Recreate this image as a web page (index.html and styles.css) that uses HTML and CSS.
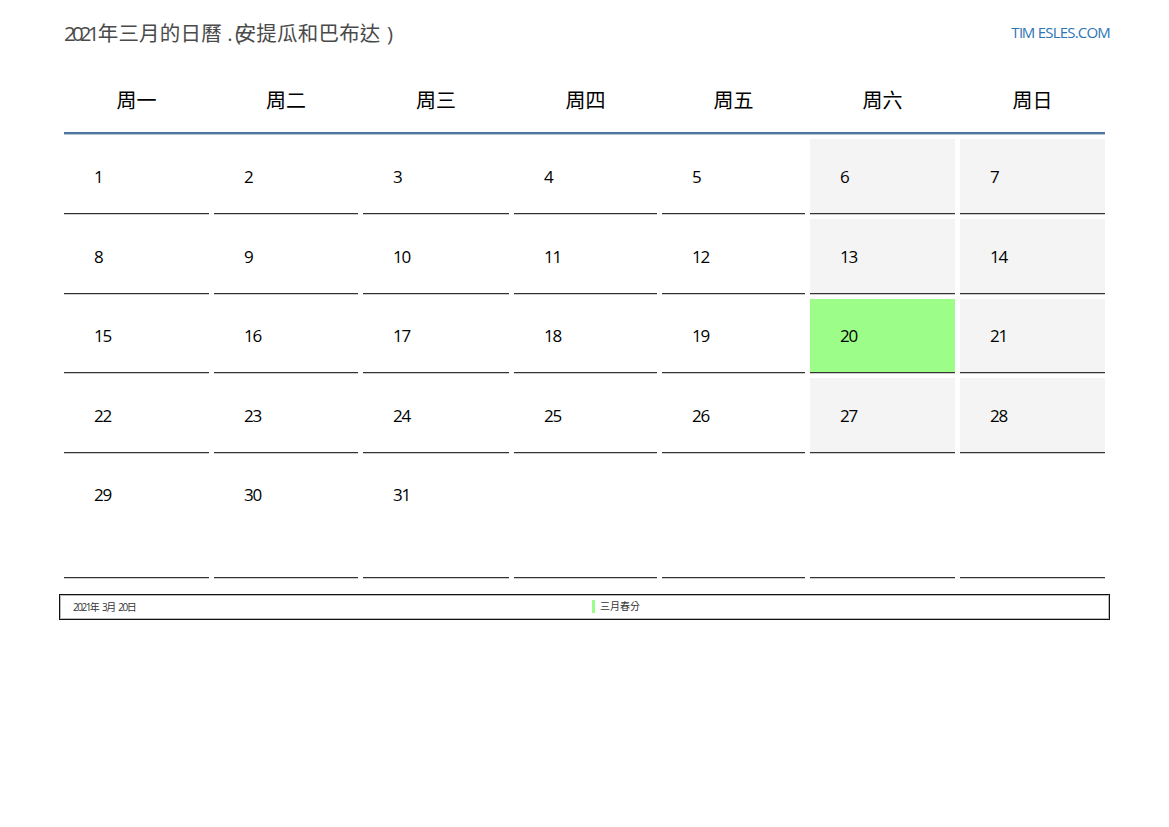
FILE: index.html
```html
<!DOCTYPE html>
<html lang="zh-TW">
<head>
<meta charset="utf-8">
<title>2021年三月的日曆</title>
<link rel="stylesheet" href="styles.css">
</head>
<body>
<header class="top">
  <h1 class="title"><span class="tight">2021</span><span class="cjk">年三月的日曆</span> <span class="tight2">.(</span><span class="cjk">安提瓜和巴布达</span> <span class="close">)</span></h1>
  <a class="site"><span class="gap-t">T</span><span class="gap-m">IM</span><span class="rest">ESLES.COM</span></a>
</header>
<div class="calendar">
  <div class="head">周一</div><div class="head">周二</div><div class="head">周三</div><div class="head">周四</div><div class="head">周五</div><div class="head">周六</div><div class="head">周日</div>
  <div class="rule"></div>
  <div class="day">1</div><div class="day">2</div><div class="day">3</div><div class="day">4</div><div class="day">5</div><div class="day off">6</div><div class="day off">7</div>
  <div class="day">8</div><div class="day">9</div><div class="day">10</div><div class="day">11</div><div class="day">12</div><div class="day off">13</div><div class="day off">14</div>
  <div class="day">15</div><div class="day">16</div><div class="day">17</div><div class="day">18</div><div class="day">19</div><div class="day holiday">20</div><div class="day off">21</div>
  <div class="day">22</div><div class="day">23</div><div class="day">24</div><div class="day">25</div><div class="day">26</div><div class="day off">27</div><div class="day off">28</div>
  <div class="day last">29</div><div class="day last">30</div><div class="day last">31</div><div class="day last"></div><div class="day last"></div><div class="day last"></div><div class="day last"></div>
</div>
<footer class="notes">
  <div class="note-date">2021年 3月 20日</div>
  <div class="note-name">三月春分</div>
</footer>
</body>
</html>
```
FILE: styles.css
```css
* { box-sizing: border-box; }
html, body { margin: 0; background: #fff; }
body {
  width: 1169px;
  height: 827px;
  overflow: hidden;
  padding: 0 59px 0 59px;
  font-family: "Open Sans", "Noto Sans CJK TC", sans-serif;
  color: #000;
}
.top {
  display: flex;
  justify-content: space-between;
  align-items: center;
  height: 66px;
  padding-left: 5px;
  padding-bottom: 3px;
}
.title {
  margin: 0;
  font-size: 20.5px;
  font-weight: 400;
  color: #4a4a4a;
  white-space: pre;
}
.cjk { letter-spacing: 0.2px; }
.tight { letter-spacing: -3.8px; margin-right: 2px; }
.tight2 { letter-spacing: 2.5px; margin-right: -8px; }
.close { margin-left: 1px; }
.site {
  font-size: 15px;
  color: #2e75b6;
  letter-spacing: -1.5px;
}
.gap-t { margin-right: 1px; }
.gap-m { margin-right: 4px; }
.rest { letter-spacing: -0.8px; }
.calendar {
  display: grid;
  width: 1041px;
  margin-left: 5px;
  grid-template-columns: 145px 144px 146px 143px 143px 145px 145px;
  column-gap: 5px;
  grid-template-rows: 66px 7px 75px 80px 79px 80px 125px;
  row-gap: 0;
}
.head {
  display: flex;
  align-items: center;
  justify-content: center;
  font-size: 20px;
}
.rule {
  grid-column: 1 / -1;
  height: 2px;
  background: #4f74a0;
  box-shadow: 0 1px 0 #b5c4d6;
}
.day {
  display: flex;
  align-items: center;
  padding-left: 30px;
  font-size: 17px;
  letter-spacing: -1.2px;
  border-bottom: 1px solid #333;
  box-shadow: 0 1px 0 #ccc;
}
.day:nth-child(n+16) { margin-top: 5px; }
.off { background: #f4f4f4; }
.holiday { background: #9cfd89; }
.last { align-items: flex-start; padding-top: 25px; }
.notes {
  display: flex;
  height: 26px;
  margin-top: 16px;
  padding-bottom: 2px;
  width: 1051px;
  border: 1px solid #111;
  box-shadow: inset 0 0 0 1px #bbb;
  align-items: center;
  font-size: 10px;
  color: #333;
}
.note-date { width: 532px; padding-left: 13px; letter-spacing: -1.5px; word-spacing: 2.5px; }
.note-name {
  border-left: 3px solid #9cfd89;
  padding-left: 5px;
  line-height: 13px;
}
```
